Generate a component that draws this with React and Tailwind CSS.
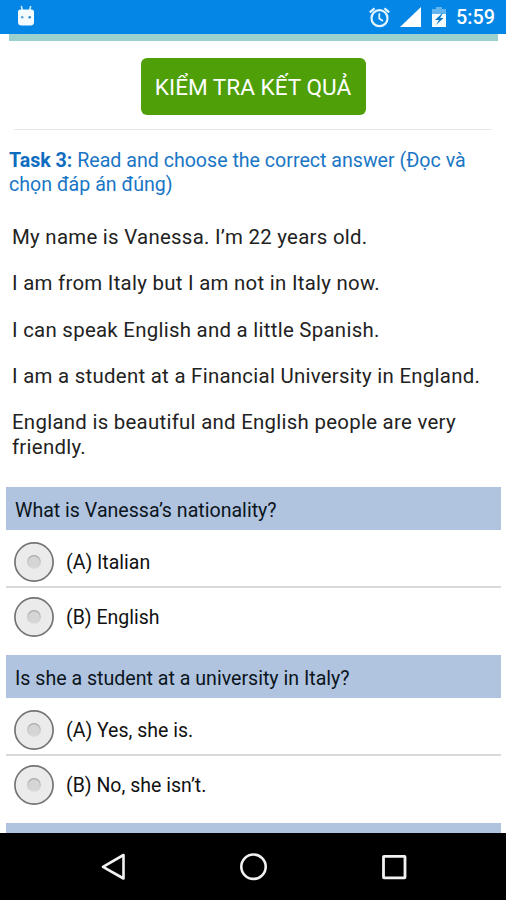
import { useState } from "react";

const passage = [
  { text: "My name is Vanessa. I’m 22 years old." },
  { text: "I am from Italy but I am not in Italy now." },
  { text: "I can speak English and a little Spanish." },
  { text: "I am a student at a Financial University in England." },
  { text: "England is beautiful and English people are very friendly." },
];

const questions = [
  {
    title: "What is Vanessa’s nationality?",
    options: ["(A) Italian", "(B) English"],
  },
  {
    title: "Is she a student at a university in Italy?",
    options: ["(A) Yes, she is.", "(B) No, she isn’t."],
  },
];

const StatusBar = () => (
  <header className="flex h-[34px] shrink-0 items-center justify-between bg-[#0386e6] pl-[17px] pr-[11px] text-white">
    <svg width="18" height="22" viewBox="0 0 18 22" className="-mt-1">
      <path d="M4.300 2l1 4M13.700 2l-1 4" stroke="#cfeaff" strokeWidth="1.600" />
      <path
        d="M3.500 5.500h11q2.500 0 2.500 2.500v10q0 3.500-3.500 3.500h-9Q1 21.500 1 18V8q0-2.500 2.500-2.500z"
        fill="#f4fbff"
      />
      <circle cx="5.200" cy="13.200" r="1.300" fill="#5da9dc" />
      <circle cx="12.700" cy="13.200" r="1.300" fill="#2f8fd6" />
    </svg>
    <div className="flex items-center">
      <svg width="22" height="22" viewBox="0 0 22 22" fill="none" stroke="#e3f5ff">
        <circle cx="11.500" cy="12.200" r="8" strokeWidth="2.200" />
        <path d="M1.800 6.400l4.700-4M21.200 6.400l-4.700-4" strokeWidth="2.200" />
        <path d="M11.300 7.200v5.300l3.700 2.400" strokeWidth="1.800" />
      </svg>
      <svg width="21" height="20" viewBox="0 0 21 20" className="ml-[10px]">
        <path d="M0 20L21 0v20z" fill="#fff" />
      </svg>
      <svg width="14" height="20" viewBox="0 0 14 20" className="ml-[11px]">
        <path d="M4 0h6v2h4v5H0V2h4z" fill="#62b5ee" />
        <path d="M0 7h14v13H0z" fill="#f4fbff" />
        <path d="M11 5.500l-8 7.500h4L4 18l7.500-7H8.200z" fill="#0877c9" />
      </svg>
      <span className="ml-[10px] mt-px text-[19.800px] font-medium leading-none">5:59</span>
    </div>
  </header>
);

const Radio = ({ checked }) => (
  <svg width="40" height="40" viewBox="0 0 40 40" className="shrink-0">
    <defs>
      <linearGradient id="dot" x1="0" y1="0" x2="0" y2="1">
        <stop offset="0" stopColor="#a8a8a8" />
        <stop offset="1" stopColor="#dedede" />
      </linearGradient>
    </defs>
    <circle cx="20" cy="20" r="19.100" fill="#ebebeb" stroke="#747474" strokeWidth="1.700" />
    <circle cx="20" cy="20" r="6.300" fill={checked ? "#0386e6" : "#d5d5d5"} stroke="url(#dot)" strokeWidth="1.200" />
  </svg>
);

const Question = ({ title, options }) => {
  const [selected, setSelected] = useState(null);

  return (
    <section className="h-[168px] shrink-0">
      <h2 className="flex h-[43px] items-center bg-[#b0c4df] pl-[9px] pt-1 text-[19.600px] text-[#0b1520]">
        <span className="whitespace-nowrap">{title}</span>
      </h2>
      {options.map((option, i) => (
        <button
          key={option}
          type="button"
          onClick={() => setSelected(i)}
          className={`flex w-full items-center gap-3 pl-2 text-left text-[19.500px] text-[#111] ${
            i === 0 ? "h-[58px] border-b-2 border-[#d9d9d9] pt-2" : "h-[56px] pt-0.5"
          }`}
        >
          <Radio checked={selected === i} />
          <span className="mt-px whitespace-nowrap">{option}</span>
        </button>
      ))}
    </section>
  );
};

const NavBar = () => (
  <nav className="flex h-[67px] shrink-0 items-center justify-between bg-black pl-[100px] pr-[98px]">
    <svg width="28" height="30" viewBox="0 0 28 30" fill="none" stroke="#f2f2f2" strokeWidth="2.600">
      <path d="M23.500 3v23.500L3 14.800z" strokeLinejoin="round" />
    </svg>
    <svg width="30" height="30" viewBox="0 0 30 30" fill="none" stroke="#f2f2f2" strokeWidth="2.600">
      <circle cx="14.500" cy="14.700" r="12.200" />
    </svg>
    <svg width="28" height="28" viewBox="0 0 28 28" fill="none" stroke="#f2f2f2" strokeWidth="2.800">
      <rect x="3.500" y="3.300" width="21.500" height="21.500" rx="0.500" />
    </svg>
  </nav>
);

const App = () => {
  return (
    <div className="flex h-[900px] w-[506px] flex-col overflow-hidden bg-white font-['Roboto',sans-serif]">
      <StatusBar />
      <main className="flex min-h-0 flex-1 flex-col overflow-hidden">
        <div className="ml-[9px] mr-2 h-[7px] shrink-0 bg-[#9ad0cd]" />
        <button
          type="button"
          className="mx-auto mt-[17px] h-[57px] w-[225px] shrink-0 rounded-md bg-[#4e9f08] pt-0.5 text-[22.600px] text-white"
        >
          <span className="whitespace-nowrap">KIỂM TRA KẾT QUẢ</span>
        </button>
        <hr className="mx-[14px] mt-[14px] shrink-0 border-t border-[#e8e8e8]" />
        <p className="ml-[9px] mt-[19px] shrink-0 text-[19.600px] leading-[23.500px] text-[#1976c5]">
          <b className="font-bold text-[#0f6dc0]">Task 3:</b> Read and choose the correct answer (Đọc và
          <br />
          chọn đáp án đúng)
        </p>
        <div className="ml-3 mt-[29px] flex h-[262px] shrink-0 flex-col gap-[21.300px] text-[20.400px] leading-[25px] tracking-[0.280px] text-[#222]">
          {passage.map(({ text }) => (
            <p key={text} className="max-w-[480px]">
              {text}
            </p>
          ))}
        </div>
        <div className="ml-1.5 mr-[5px] flex flex-col">
          {questions.map((question) => (
            <Question key={question.title} {...question} />
          ))}
          <div className="h-[43px] shrink-0 bg-[#b0c4df]" />
        </div>
      </main>
      <NavBar />
    </div>
  );
};

export default App;
